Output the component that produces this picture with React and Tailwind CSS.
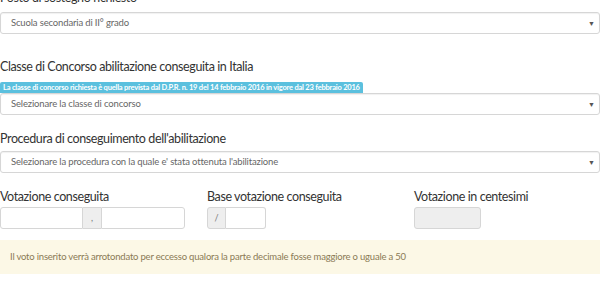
export default function App() {
  const font = { fontFamily: "Lato, 'Open Sans', sans-serif" };
  const label = "text-[12.5px] leading-[18px] tracking-[-0.4px] text-[#333]";
  const Select = ({ text }) => (
    <div className="flex h-[22px] items-center justify-between rounded-[3px] border border-[#d6d6d6] bg-white pl-[10px] pr-[4px] shadow-[inset_0_1px_1px_rgba(0,0,0,0.06)]">
      <span className="text-[9.5px] tracking-[-0.15px] text-[#666]">{text}</span>
      <span className="text-[7px] text-[#555]">▼</span>
    </div>
  );
  return (
    <div className="h-[290px] w-[600px] overflow-hidden bg-white" style={font}>
      <div className={`-mt-[11px] ${label}`}>Posto di sostegno richiesto</div>
      <div className="mt-[5px]">
        <Select text="Scuola secondaria di II° grado" />
      </div>
      <div className={`mt-[24px] ${label}`}>Classe di Concorso abilitazione conseguita in Italia</div>
      <div className="mt-[6px] flex">
        <span className="h-[11px] rounded-t-[2px] bg-[#5bc0de] px-[3px] text-[7.5px] font-bold leading-[11px] tracking-[-0.2px] text-white">
          La classe di concorso richiesta è quella prevista dal D.P.R. n. 19 del 14 febbraio 2016 in vigore dal 23 febbraio 2016
        </span>
      </div>
      <Select text="Selezionare la classe di concorso" />
      <div className={`mt-[15px] ${label}`}>Procedura di conseguimento dell'abilitazione</div>
      <div className="mt-[3px]">
        <Select text="Selezionare la procedura con la quale e' stata ottenuta l'abilitazione" />
      </div>
      <div className={`mt-[15px] flex ${label}`}>
        <div className="w-[207px]">Votazione conseguita</div>
        <div className="w-[207px]">Base votazione conseguita</div>
        <div>Votazione in centesimi</div>
      </div>
      <div className="mt-[1px] flex h-[22px]">
        <div className="flex w-[207px]">
          <div className="w-[83px] rounded-l-[3px] border border-[#d6d6d6] bg-white" />
          <div className="flex w-[18px] items-center justify-center border-y border-[#d6d6d6] bg-[#eee] text-[9px] text-[#777]">,</div>
          <div className="w-[84px] rounded-r-[3px] border border-[#d6d6d6] bg-white" />
        </div>
        <div className="flex w-[207px]">
          <div className="flex w-[19px] items-center justify-center rounded-l-[3px] border border-[#d6d6d6] bg-[#eee] text-[9px] text-[#777]">/</div>
          <div className="w-[40px] rounded-r-[3px] border border-l-0 border-[#d6d6d6] bg-white" />
        </div>
        <div className="w-[67px] rounded-[3px] border border-[#d6d6d6] bg-[#eee]" />
      </div>
      <div className="mt-[11px] flex h-[34px] items-center bg-[#fcf8e6] pl-[10px] text-[9.5px] tracking-[-0.2px] text-[#8a7a55]">
        Il voto inserito verrà arrotondato per eccesso qualora la parte decimale fosse maggiore o uguale a 50
      </div>
    </div>
  );
}
